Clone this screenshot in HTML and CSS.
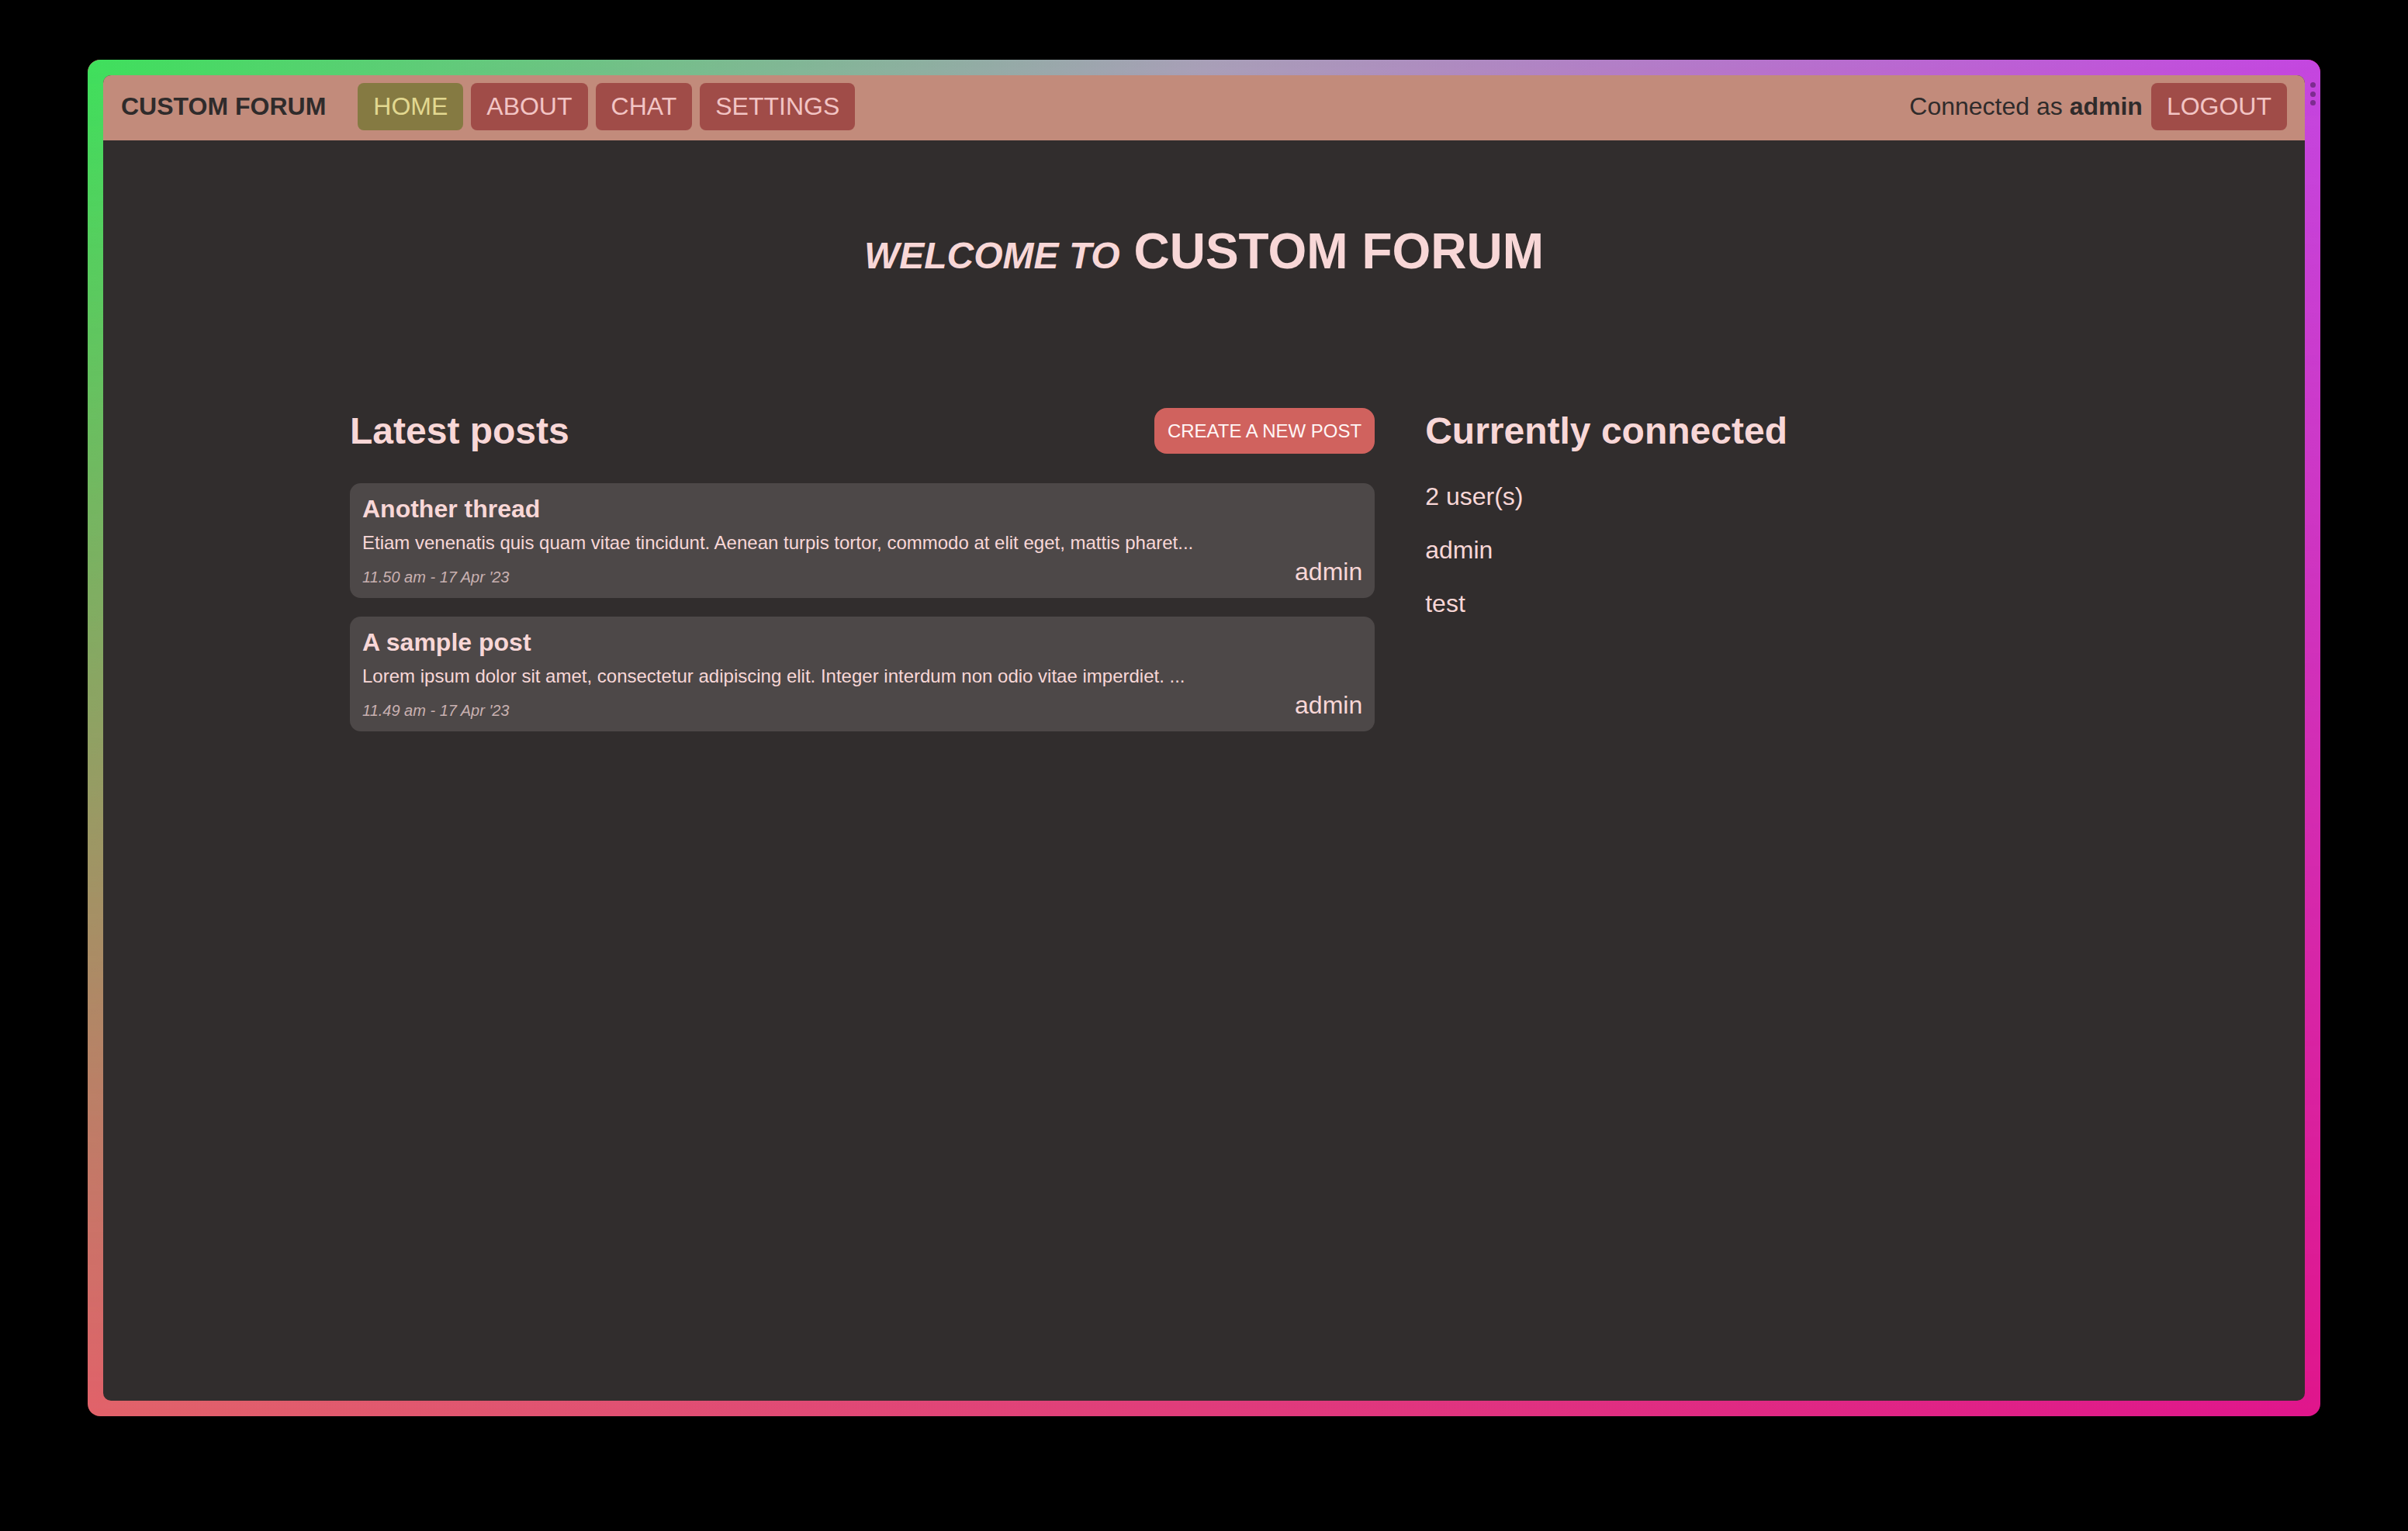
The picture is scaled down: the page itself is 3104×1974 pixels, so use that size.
FILE: index.html
```html
<!DOCTYPE html>
<html lang="en">
<head>
<meta charset="utf-8">
<title>Custom Forum</title>
<link rel="stylesheet" href="styles.css">
</head>
<body>
<div class="page">
  <div class="frame">
    <div class="window">
      <header class="nav">
        <div class="nav-left">
          <span class="brand">CUSTOM FORUM</span>
          <nav class="links">
            <a class="link active" href="#">HOME</a>
            <a class="link" href="#">ABOUT</a>
            <a class="link" href="#">CHAT</a>
            <a class="link" href="#">SETTINGS</a>
          </nav>
        </div>
        <div class="nav-right">
          <span class="user">Connected as <b>admin</b></span>
          <a class="link" href="#">LOGOUT</a>
        </div>
      </header>
      <main class="main">
        <h1 class="welcome"><em>WELCOME TO</em> CUSTOM FORUM</h1>
        <div class="columns">
          <section class="posts">
            <div class="posts-head">
              <h2 class="section-title">Latest posts</h2>
              <a class="create" href="#">CREATE A NEW POST</a>
            </div>
            <article class="card">
              <h3 class="card-title">Another thread</h3>
              <p class="card-body">Etiam venenatis quis quam vitae tincidunt. Aenean turpis tortor, commodo at elit eget, mattis pharet...</p>
              <div class="card-foot">
                <span class="date">11.50 am - 17 Apr '23</span>
                <span class="author">admin</span>
              </div>
            </article>
            <article class="card">
              <h3 class="card-title">A sample post</h3>
              <p class="card-body">Lorem ipsum dolor sit amet, consectetur adipiscing elit. Integer interdum non odio vitae imperdiet. ...</p>
              <div class="card-foot">
                <span class="date">11.49 am - 17 Apr '23</span>
                <span class="author">admin</span>
              </div>
            </article>
          </section>
          <aside class="online">
            <h2 class="section-title">Currently connected</h2>
            <p class="online-item">2 user(s)</p>
            <p class="online-item">admin</p>
            <p class="online-item">test</p>
          </aside>
        </div>
      </main>
    </div>
    <div class="grip"><span></span><span></span><span></span></div>
  </div>
</div>
</body>
</html>
```

FILE: styles.css
```css
html, body {
  margin: 0;
  padding: 0;
  background: #000;
}

body {
  font-family: "Liberation Sans", Arial, Helvetica, sans-serif;
  height: 1974px;
  overflow: hidden;
}

.page {
  padding: 77px 113px 0;
}

.frame {
  position: relative;
  box-sizing: border-box;
  height: 1749px;
  padding: 20px;
  border-radius: 16px;
  background: linear-gradient(to right, #e2626a, #e0168c);
}

.frame::before {
  content: "";
  position: absolute;
  inset: 0;
  border-radius: 16px;
  background: linear-gradient(to right, #3ee05c, #a8a0b8 50%, #c446e0);
  -webkit-mask-image: linear-gradient(to bottom, #000, transparent);
  mask-image: linear-gradient(to bottom, #000, transparent);
}

.window {
  position: relative;
  z-index: 1;
  height: 100%;
  border-radius: 10px;
  background: #312d2d;
  overflow: hidden;
}

.grip {
  position: absolute;
  z-index: 2;
  top: 29px;
  right: 6px;
  display: flex;
  flex-direction: column;
  gap: 4.5px;
}

.grip span {
  width: 7px;
  height: 7px;
  border-radius: 50%;
  background: #7d2c90;
}

/* Nav */
.nav {
  display: flex;
  justify-content: space-between;
  align-items: center;
  background: #c28b7b;
  padding: 10px 23px 13px;
}

.nav-left,
.nav-right {
  display: flex;
  align-items: center;
}

.brand {
  font-size: 32px;
  font-weight: bold;
  color: #2f2b2b;
  margin-right: 41px;
}

.links {
  display: flex;
  gap: 10px;
}

.link {
  display: block;
  font-size: 32px;
  line-height: 37px;
  padding: 12px 20px;
  border-radius: 8px;
  background: #a04c48;
  color: #f2c4c4;
  text-decoration: none;
}

.link.active {
  background: #857a42;
  color: #e2d890;
}

.user {
  font-size: 32px;
  color: #2f2b2b;
  margin-right: 11px;
}

/* Main */
.main {
  padding-top: 106px;
  color: #f8d7d7;
}

.welcome {
  margin: 0;
  text-align: center;
  font-size: 64px;
  line-height: 74px;
  font-weight: bold;
}

.welcome em {
  font-size: 48px;
}

.columns {
  display: flex;
  width: 2202px;
  margin: 159px auto 0;
}

.posts {
  flex: 0 0 60%;
}

.online {
  flex: 1;
  padding-left: 65px;
  padding-top: 2px;
}

.posts-head {
  display: flex;
  justify-content: space-between;
  align-items: center;
  margin-bottom: 38px;
}

.section-title {
  margin: 0;
  font-size: 48px;
  line-height: 55px;
  font-weight: bold;
}

.create {
  display: block;
  font-size: 24px;
  line-height: 29px;
  padding: 15px 17px;
  border-radius: 16px;
  background: #d0625e;
  color: #fff6f6;
  text-decoration: none;
}

.card {
  background: #4d4848;
  border-radius: 14px;
  padding: 15px 16px 15px;
  margin-bottom: 24px;
}

.card-title {
  margin: 0;
  font-size: 32px;
  line-height: 37px;
  font-weight: bold;
}

.card-body {
  margin: 11px 0 0;
  font-size: 24px;
  line-height: 28px;
}

.card-foot {
  display: flex;
  justify-content: space-between;
  align-items: flex-end;
  margin-top: 5px;
}

.date {
  font-size: 20px;
  line-height: 23px;
  font-style: italic;
  color: #c9b1b1;
}

.author {
  font-size: 32px;
  line-height: 37px;
}

.online .section-title {
  margin-bottom: 39px;
}

.online-item {
  margin: 0 0 32px;
  font-size: 32px;
  line-height: 37px;
}
```
